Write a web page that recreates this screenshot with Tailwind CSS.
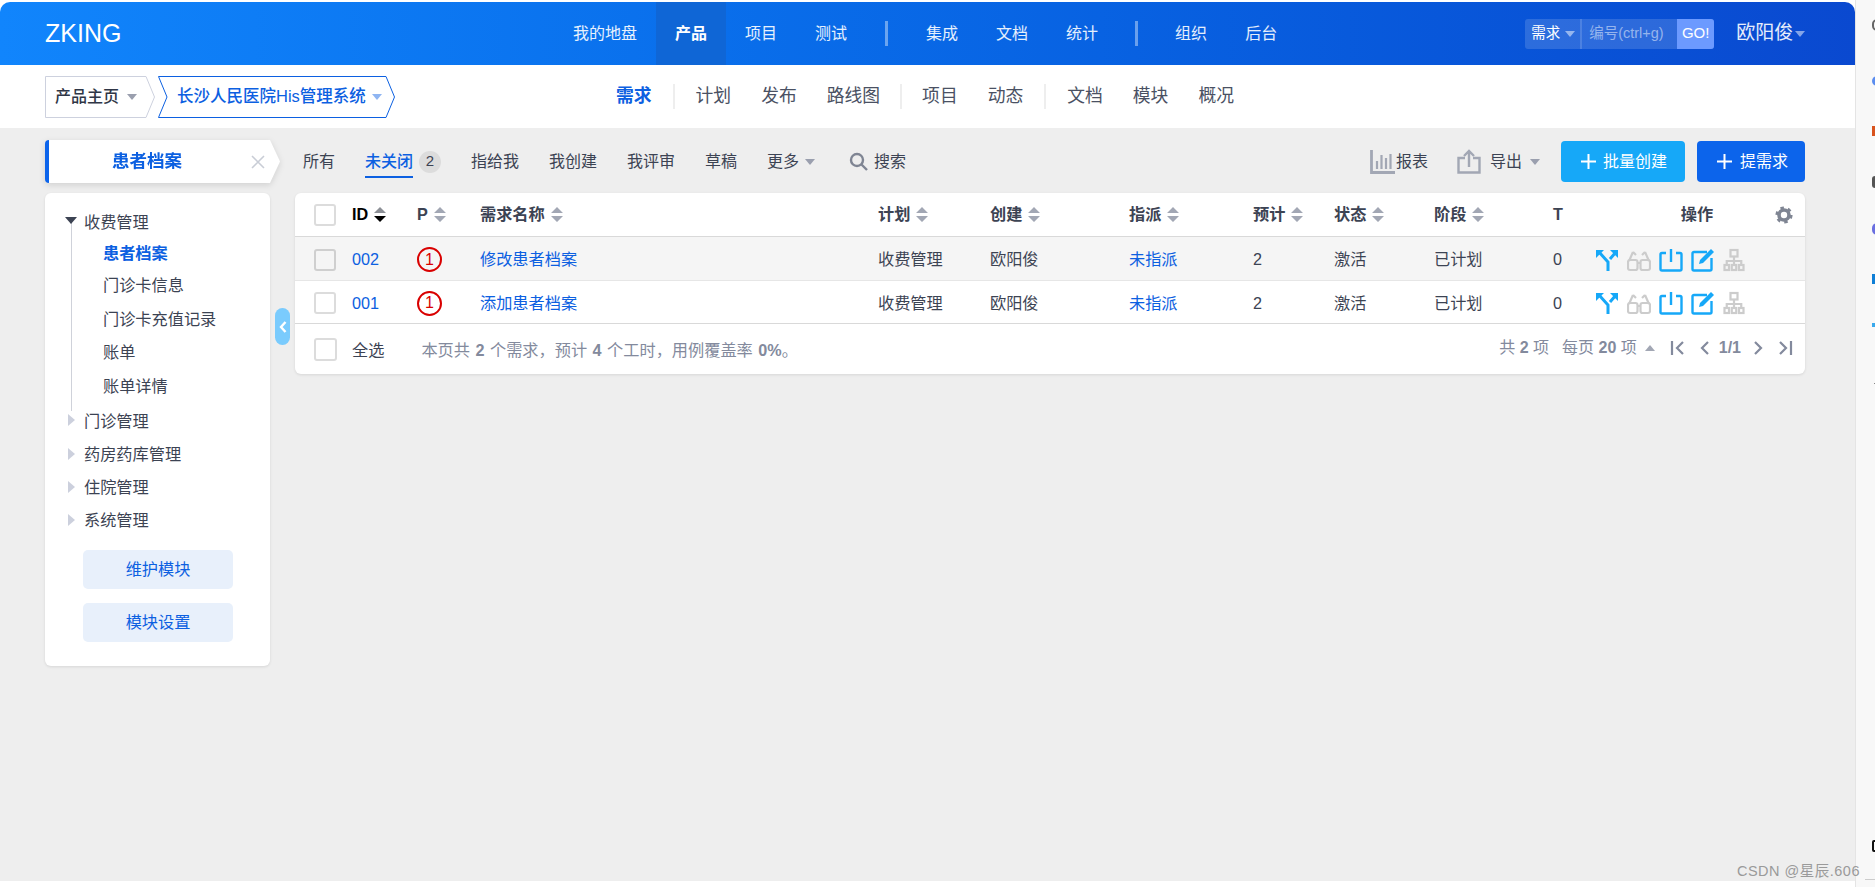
<!DOCTYPE html>
<html lang="zh">
<head>
    <meta charset="UTF-8">
    <title>需求 - ZKING</title>
    <script src="https://cdn.jsdelivr.net/npm/@tailwindcss/browser@4"></script>
</head>
<body class="w-[1875px] h-[887px] overflow-hidden bg-white flex font-['Liberation_Sans','Noto_Sans_CJK_SC',sans-serif] text-[16px] text-[#3c4353]">
    <div class="w-[1855px] h-full flex flex-col pt-[2px] relative z-10">

        <!-- 顶部导航 -->
        <header class="h-[63px] shrink-0 flex items-center rounded-t-[10px] bg-linear-to-r from-[#1185fc] to-[#0a49d0] text-white">
            <div class="pl-[45px] w-[554px] text-[25px] leading-none">ZKING</div>
            <nav class="flex items-stretch h-full text-white/90">
                <a class="px-[19px] flex items-center">我的地盘</a>
                <a class="px-[19px] flex items-center bg-[#0f66d6] font-bold text-white">产品</a>
                <a class="px-[19px] flex items-center">项目</a>
                <a class="px-[19px] flex items-center">测试</a>
                <span class="mx-[19px] my-auto w-[3px] h-[25px] bg-white/40"></span>
                <a class="px-[19px] flex items-center">集成</a>
                <a class="px-[19px] flex items-center">文档</a>
                <a class="px-[19px] flex items-center">统计</a>
                <span class="mx-[18px] my-auto w-[3px] h-[25px] bg-white/40"></span>
                <a class="px-[19px] flex items-center">组织</a>
                <a class="px-[19px] flex items-center">后台</a>
            </nav>
            <div class="ml-[229px] flex h-[30px] w-[189px] rounded-[3px] overflow-hidden bg-white/15 text-[14.5px]">
                <div class="w-[57px] flex items-center pl-[6px] gap-[5px] border-r-2 border-white/15">需求<span class="w-0 h-0 border-x-[5px] border-x-transparent border-t-[6px] border-t-white/50"></span></div>
                <div class="w-[95px] flex items-center pl-[7px] text-white/50">编号(ctrl+g)</div>
                <div class="w-[37px] flex items-center justify-center bg-[#6c9aff] text-[15px]">GO!</div>
            </div>
            <div class="ml-[22px] flex items-center gap-[2px] text-[19px] text-white/90">欧阳俊<span class="w-0 h-0 border-x-[5px] border-x-transparent border-t-[6px] border-t-white/50"></span></div>
        </header>

        <!-- 二级导航 -->
        <div class="h-[63px] shrink-0 flex items-center pl-[45px]">
            <a class="relative w-[110px] h-[42px] flex items-center pl-[10px] gap-[8px] font-medium text-[#2f3646]">
                <svg class="absolute left-0 top-0" width="110" height="42" fill="none" stroke="#cdd1de" stroke-width="1"><path d="M.5.5H101L109.5 21 101 41.5H.5z"/></svg>
                <span class="relative">产品主页</span><span class="relative w-0 h-0 border-x-[5px] border-x-transparent border-t-[6px] border-t-[#9a9fae]"></span>
            </a>
            <a class="relative ml-[3px] w-[237px] h-[42px] flex items-center pl-[19px] gap-[6px] text-[16.5px] font-medium text-[#0c60e1]">
                <svg class="absolute left-0 top-0" width="237" height="42" fill="none" stroke="#0c60e1" stroke-width="1"><path d="M.5.5H228L236.5 21 228 41.5H.5L9 21z"/></svg>
                <span class="relative">长沙人民医院His管理系统</span><span class="relative w-0 h-0 border-x-[5px] border-x-transparent border-t-[6px] border-t-[#8fb5f2]"></span>
            </a>
            <nav class="ml-[206px] flex items-center text-[17.8px] text-[#4a5163]">
                <a class="px-[15px] font-bold text-[#0c60e1]">需求</a>
                <span class="mx-[6px] w-[2px] h-[25px] bg-[#eeeeee]"></span>
                <a class="px-[15px]">计划</a>
                <a class="px-[15px]">发布</a>
                <a class="px-[15px]">路线图</a>
                <span class="mx-[5px] w-[2px] h-[25px] bg-[#eeeeee]"></span>
                <a class="px-[15px]">项目</a>
                <a class="px-[15px]">动态</a>
                <span class="mx-[6px] w-[2px] h-[25px] bg-[#eeeeee]"></span>
                <a class="px-[15px]">文档</a>
                <a class="px-[15px]">模块</a>
                <a class="px-[15px]">概况</a>
            </nav>
        </div>

        <!-- 内容区 -->
        <main class="flex-1 bg-[#eeeeee] pl-[45px] pr-[50px] pt-[12px] relative">
            <!-- 工具条 -->
            <div class="h-[43px] flex items-center">
                <div class="drop-shadow-[0_2px_3px_rgba(0,0,0,0.12)] shrink-0">
                    <div class="w-[235px] h-[43px] bg-white border-l-4 border-[#0c64eb] rounded-l-[4px] flex items-center [clip-path:polygon(0_0,225px_0,235px_50%,225px_100%,0_100%)]">
                        <span class="ml-[63px] w-[70px] whitespace-nowrap text-[17.5px] font-bold text-[#0c60e1]">患者档案</span>
                        <svg class="ml-[69px]" width="14" height="14" fill="none" stroke="#c9cdd6" stroke-width="1.6"><path d="M1 1l12 12M13 1L1 13"/></svg>
                    </div>
                </div>
                <nav class="ml-[23px] flex items-center gap-[30px]">
                    <a>所有</a>
                    <div class="flex items-center gap-[6px]">
                        <a class="relative font-medium text-[#0c60e1]">未关闭<span class="absolute left-0 right-0 top-[26px] h-[2px] bg-[#0c60e1]"></span></a>
                        <span class="w-[22px] h-[22px] rounded-full bg-[#dcdcdc] flex items-center justify-center text-[15px]">2</span>
                    </div>
                    <a>指给我</a>
                    <a>我创建</a>
                    <a>我评审</a>
                    <a>草稿</a>
                    <a class="flex items-center gap-[6px]">更多<span class="w-0 h-0 border-x-[5px] border-x-transparent border-t-[6px] border-t-[#9a9fae]"></span></a>
                    <a class="ml-[4px] flex items-center gap-[6px]">
                        <svg width="19" height="19" viewBox="0 0 19 19" fill="none" stroke="#7f8593" stroke-width="2.4"><circle cx="8" cy="8" r="6"/><path d="M12.5 12.5L18 18"/></svg>搜索
                    </a>
                </nav>
                <div class="ml-auto flex items-center">
                    <a class="flex items-center gap-[1px]">
                        <svg width="25" height="24" viewBox="0 0 25 24" fill="none" stroke="#a2a7b4" stroke-width="2.2"><path d="M1.500 0v22.500H25" stroke-width="2.800"/><path d="M7 19V11M11.500 19V5M16 19V8M20.500 19V4"/></svg>报表
                    </a>
                    <a class="ml-[29px] flex items-center gap-[9px]">
                        <svg width="24" height="25" viewBox="0 0 24 25" fill="none" stroke="#a2a7b4" stroke-width="2.400"><path d="M8 9H1.500v14.500h21V9H16"/><path d="M12 18V2M7 7l5-5 5 5"/></svg>导出
                    </a>
                    <span class="ml-[8px] w-0 h-0 border-x-[5px] border-x-transparent border-t-[6px] border-t-[#9a9fae]"></span>
                    <a class="ml-[21px] w-[124px] h-[41px] rounded-[4px] bg-[#16a8f8] text-white flex items-center pl-[20px] gap-[7px]">
                        <svg width="15" height="15" fill="none" stroke="#fff" stroke-width="2"><path d="M7.500 0v15M0 7.500h15"/></svg>批量创建
                    </a>
                    <a class="ml-[12px] w-[108px] h-[41px] rounded-[4px] bg-[#0c64eb] text-white flex items-center pl-[20px] gap-[8px]">
                        <svg width="15" height="15" fill="none" stroke="#fff" stroke-width="2"><path d="M7.500 0v15M0 7.500h15"/></svg>提需求
                    </a>
                </div>
            </div>

            <div class="mt-[10px] flex items-start gap-[25px]">
                <!-- 模块树 -->
                <aside class="w-[225px] h-[473px] shrink-0 bg-white rounded-[6px] shadow-[0_1px_3px_rgba(0,0,0,0.1)] pt-[13px] relative text-[16.2px]">
                    <span class="absolute left-[25.500px] top-[29px] w-[1px] h-[189px] bg-[#cfd2da]"></span>
                    <div class="flex items-center h-[32px] pl-[39px] relative">
                        <span class="absolute left-[20px] top-[11px] w-0 h-0 border-x-[6px] border-x-transparent border-t-[7px] border-t-[#3c4353]"></span>收费管理
                    </div>
                    <ul class="pl-[58px]">
                        <li class="h-[31px] flex items-center font-bold text-[#0c60e1]">患者档案</li>
                        <li class="h-[33px] flex items-center">门诊卡信息</li>
                        <li class="h-[34px] flex items-center">门诊卡充值记录</li>
                        <li class="h-[33px] flex items-center">账单</li>
                        <li class="h-[34px] flex items-center">账单详情</li>
                    </ul>
                    <div class="flex items-center h-[34px] pl-[39px] relative mt-[1px]"><span class="absolute left-[23px] top-[10px] w-0 h-0 border-y-[6px] border-y-transparent border-l-[7px] border-l-[#ccd0dd]"></span>门诊管理</div>
                    <div class="flex items-center h-[33px] pl-[39px] relative"><span class="absolute left-[23px] top-[10px] w-0 h-0 border-y-[6px] border-y-transparent border-l-[7px] border-l-[#ccd0dd]"></span>药房药库管理</div>
                    <div class="flex items-center h-[33px] pl-[39px] relative"><span class="absolute left-[23px] top-[10px] w-0 h-0 border-y-[6px] border-y-transparent border-l-[7px] border-l-[#ccd0dd]"></span>住院管理</div>
                    <div class="flex items-center h-[33px] pl-[39px] relative"><span class="absolute left-[23px] top-[10px] w-0 h-0 border-y-[6px] border-y-transparent border-l-[7px] border-l-[#ccd0dd]"></span>系统管理</div>
                    <div class="mt-[13px] ml-[38px] w-[150px] flex flex-col gap-[14px] text-[#0c60e1]">
                        <a class="h-[39px] rounded-[5px] bg-[#e8f0fb] flex items-center justify-center">维护模块</a>
                        <a class="h-[39px] rounded-[5px] bg-[#e8f0fb] flex items-center justify-center">模块设置</a>
                    </div>
                    <button class="absolute left-[230px] top-[115px] w-[15px] h-[37px] rounded-full bg-[#7acbfd] flex items-center justify-center">
                        <svg width="8" height="12" fill="none" stroke="#fff" stroke-width="2.400"><path d="M6.500 1L2 6l4.500 5"/></svg>
                    </button>
                </aside>

                <!-- 需求列表 -->
                <section class="w-[1510px] bg-white rounded-[6px] shadow-[0_1px_3px_rgba(0,0,0,0.1)] text-[16.2px]">
                    <table class="w-full table-fixed border-separate border-spacing-0 text-left">
                        <thead>
                            <tr class="h-[44px]">
                                <th class="w-[57px] pl-[19px] border-b border-[#d9d9d9]"><span class="block w-[22px] h-[22px] rounded-[3px] border-2 border-[#dcdcdc]"></span></th>
                                <th class="w-[65px] border-b border-[#d9d9d9] font-bold text-black"><span class="flex items-center gap-[6px]">ID<svg width="12" height="15"><path d="M6 0l6 6H0z" fill="#8c8f96"/><path d="M6 15l6-6H0z" fill="#000"/></svg></span></th>
                                <th class="w-[63px] border-b border-[#d9d9d9] font-bold"><span class="flex items-center gap-[6px]">P<svg width="12" height="15" fill="#a2a7b4"><path d="M6 0l6 6H0zM6 15l6-6H0z"/></svg></span></th>
                                <th class="w-[398px] border-b border-[#d9d9d9] font-bold"><span class="flex items-center gap-[6px]">需求名称<svg width="12" height="15" fill="#a2a7b4"><path d="M6 0l6 6H0zM6 15l6-6H0z"/></svg></span></th>
                                <th class="w-[112px] border-b border-[#d9d9d9] font-bold"><span class="flex items-center gap-[6px]">计划<svg width="12" height="15" fill="#a2a7b4"><path d="M6 0l6 6H0zM6 15l6-6H0z"/></svg></span></th>
                                <th class="w-[139px] border-b border-[#d9d9d9] font-bold"><span class="flex items-center gap-[6px]">创建<svg width="12" height="15" fill="#a2a7b4"><path d="M6 0l6 6H0zM6 15l6-6H0z"/></svg></span></th>
                                <th class="w-[124px] border-b border-[#d9d9d9] font-bold"><span class="flex items-center gap-[6px]">指派<svg width="12" height="15" fill="#a2a7b4"><path d="M6 0l6 6H0zM6 15l6-6H0z"/></svg></span></th>
                                <th class="w-[81px] border-b border-[#d9d9d9] font-bold"><span class="flex items-center gap-[6px]">预计<svg width="12" height="15" fill="#a2a7b4"><path d="M6 0l6 6H0zM6 15l6-6H0z"/></svg></span></th>
                                <th class="w-[100px] border-b border-[#d9d9d9] font-bold"><span class="flex items-center gap-[6px]">状态<svg width="12" height="15" fill="#a2a7b4"><path d="M6 0l6 6H0zM6 15l6-6H0z"/></svg></span></th>
                                <th class="w-[119px] border-b border-[#d9d9d9] font-bold"><span class="flex items-center gap-[6px]">阶段<svg width="12" height="15" fill="#a2a7b4"><path d="M6 0l6 6H0zM6 15l6-6H0z"/></svg></span></th>
                                <th class="w-[42px] border-b border-[#d9d9d9] font-bold">T</th>
                                <th class="border-b border-[#d9d9d9] font-bold relative">
                                    <span class="block text-center pr-[6px]">操作</span>
                                    <svg class="absolute right-[12px] top-[13px]" width="18" height="18" viewBox="0 0 18 18" fill="none" stroke="#7f8593"><circle cx="9" cy="9" r="5" stroke-width="3.600"/><circle cx="9" cy="9" r="7.300" stroke-width="2.600" stroke-dasharray="3.500 4.140"/></svg>
                                </th>
                            </tr>
                        </thead>
                        <tbody class="[&_td]:pt-[2px]">
                            <tr class="h-[44px] bg-[#f5f5f5]">
                                <td class="pl-[19px] border-b border-[#e6e6e6]"><span class="block w-[22px] h-[22px] rounded-[3px] border-2 border-[#cfcfcf]"></span></td>
                                <td class="border-b border-[#e6e6e6] text-[#0c60e1]">002</td>
                                <td class="border-b border-[#e6e6e6]"><span class="w-[25px] h-[25px] rounded-full border-2 border-[#d90000] text-[#d90000] flex items-center justify-center text-[16px]">1</span></td>
                                <td class="border-b border-[#e6e6e6] text-[#0c60e1]">修改患者档案</td>
                                <td class="border-b border-[#e6e6e6]">收费管理</td>
                                <td class="border-b border-[#e6e6e6]">欧阳俊</td>
                                <td class="border-b border-[#e6e6e6] text-[#0c60e1]">未指派</td>
                                <td class="border-b border-[#e6e6e6]">2</td>
                                <td class="border-b border-[#e6e6e6]">激活</td>
                                <td class="border-b border-[#e6e6e6]">已计划</td>
                                <td class="border-b border-[#e6e6e6]">0</td>
                                <td class="border-b border-[#e6e6e6]">
                                    <div class="flex items-center gap-[8px]">
                                        <svg width="24" height="24" viewBox="0 0 24 24" fill="none" stroke="#16a8f8" stroke-width="3"><path d="M13 23V14L4 4M15 11l6-7"/><path d="M1 2h8L1 10zM23 2h-8l8 8z" fill="#16a8f8" stroke="none"/></svg>
                                        <svg width="24" height="24" viewBox="0 0 24 24" fill="none" stroke="#cccccc" stroke-width="2.200"><rect x="1" y="12" width="9.500" height="10" rx="2"/><rect x="13.500" y="12" width="9.500" height="10" rx="2"/><path d="M10.500 15h3M2 13l4-9M22 13l-4-9M6 4l3 3M18 4l-3 3"/></svg>
                                        <svg width="24" height="24" viewBox="0 0 24 24" fill="none" stroke="#16a8f8" stroke-width="2.400"><path d="M7 5H3a1.500 1.500 0 0 0-1.500 1.500V21A1.500 1.500 0 0 0 3 22.500h18a1.500 1.500 0 0 0 1.500-1.500V6.500A1.500 1.500 0 0 0 21 5h-4M12 1v13"/></svg>
                                        <svg width="24" height="24" viewBox="0 0 24 24" fill="none" stroke="#16a8f8" stroke-width="2.400"><path d="M16 4H3a1.500 1.500 0 0 0-1.500 1.500V21A1.500 1.500 0 0 0 3 22.500h16a1.500 1.500 0 0 0 1.500-1.500V10"/><path d="M9 12l11-11 3 3-11 11-4 1z" fill="#16a8f8" stroke="none"/></svg>
                                        <svg width="22" height="24" viewBox="0 0 22 24" fill="none" stroke="#cccccc" stroke-width="2.200"><rect x="7.500" y="2" width="7" height="6.500"/><rect x="1.500" y="17" width="4.500" height="5"/><rect x="8.750" y="17" width="4.500" height="5"/><rect x="16" y="17" width="4.500" height="5"/><path d="M11 8v9M3.750 17v-4h14.500v4"/></svg>
                                    </div>
                                </td>
                            </tr>
                            <tr class="h-[43px]">
                                <td class="pl-[19px] border-b border-[#d9d9d9]"><span class="block w-[22px] h-[22px] rounded-[3px] border-2 border-[#dcdcdc]"></span></td>
                                <td class="border-b border-[#d9d9d9] text-[#0c60e1]">001</td>
                                <td class="border-b border-[#d9d9d9]"><span class="w-[25px] h-[25px] rounded-full border-2 border-[#d90000] text-[#d90000] flex items-center justify-center text-[16px]">1</span></td>
                                <td class="border-b border-[#d9d9d9] text-[#0c60e1]">添加患者档案</td>
                                <td class="border-b border-[#d9d9d9]">收费管理</td>
                                <td class="border-b border-[#d9d9d9]">欧阳俊</td>
                                <td class="border-b border-[#d9d9d9] text-[#0c60e1]">未指派</td>
                                <td class="border-b border-[#d9d9d9]">2</td>
                                <td class="border-b border-[#d9d9d9]">激活</td>
                                <td class="border-b border-[#d9d9d9]">已计划</td>
                                <td class="border-b border-[#d9d9d9]">0</td>
                                <td class="border-b border-[#d9d9d9]">
                                    <div class="flex items-center gap-[8px]">
                                        <svg width="24" height="24" viewBox="0 0 24 24" fill="none" stroke="#16a8f8" stroke-width="3"><path d="M13 23V14L4 4M15 11l6-7"/><path d="M1 2h8L1 10zM23 2h-8l8 8z" fill="#16a8f8" stroke="none"/></svg>
                                        <svg width="24" height="24" viewBox="0 0 24 24" fill="none" stroke="#cccccc" stroke-width="2.200"><rect x="1" y="12" width="9.500" height="10" rx="2"/><rect x="13.500" y="12" width="9.500" height="10" rx="2"/><path d="M10.500 15h3M2 13l4-9M22 13l-4-9M6 4l3 3M18 4l-3 3"/></svg>
                                        <svg width="24" height="24" viewBox="0 0 24 24" fill="none" stroke="#16a8f8" stroke-width="2.400"><path d="M7 5H3a1.500 1.500 0 0 0-1.500 1.500V21A1.500 1.500 0 0 0 3 22.500h18a1.500 1.500 0 0 0 1.500-1.500V6.500A1.500 1.500 0 0 0 21 5h-4M12 1v13"/></svg>
                                        <svg width="24" height="24" viewBox="0 0 24 24" fill="none" stroke="#16a8f8" stroke-width="2.400"><path d="M16 4H3a1.500 1.500 0 0 0-1.500 1.500V21A1.500 1.500 0 0 0 3 22.500h16a1.500 1.500 0 0 0 1.500-1.500V10"/><path d="M9 12l11-11 3 3-11 11-4 1z" fill="#16a8f8" stroke="none"/></svg>
                                        <svg width="22" height="24" viewBox="0 0 22 24" fill="none" stroke="#cccccc" stroke-width="2.200"><rect x="7.500" y="2" width="7" height="6.500"/><rect x="1.500" y="17" width="4.500" height="5"/><rect x="8.750" y="17" width="4.500" height="5"/><rect x="16" y="17" width="4.500" height="5"/><path d="M11 8v9M3.750 17v-4h14.500v4"/></svg>
                                    </div>
                                </td>
                            </tr>
                        </tbody>
                    </table>
                    <div class="h-[50px] flex items-center pl-[19px] pr-[12px] text-[#838a9d]">
                        <span class="w-[23px] h-[23px] rounded-[3px] border-2 border-[#dcdcdc]"></span>
                        <span class="ml-[15px] pt-[2px] text-[#3c4353]">全选</span>
                        <span class="ml-[37px] pt-[2px] [word-spacing:1px]">本页共 <b>2</b> 个需求，预计 <b>4</b> 个工时，用例覆盖率 <b>0%</b>。</span>
                        <div class="ml-auto flex items-center -mt-[3px] text-[16px]">
                            <span>共 <b>2</b> 项</span>
                            <span class="ml-[13px]">每页 <b>20</b> 项</span>
                            <span class="ml-[8px] w-0 h-0 border-x-[5px] border-x-transparent border-b-[6px] border-b-[#a2a7b4]"></span>
                            <svg class="ml-[15px]" width="15" height="14" fill="none" stroke="#838a9d" stroke-width="2.200"><path d="M2 0v14M13 1L7 7l6 6"/></svg>
                            <svg class="ml-[14px]" width="11" height="14" fill="none" stroke="#838a9d" stroke-width="2.200"><path d="M9 1L3 7l6 6"/></svg>
                            <b class="ml-[9px]">1/1</b>
                            <svg class="ml-[12px]" width="11" height="14" fill="none" stroke="#838a9d" stroke-width="2.200"><path d="M2 1l6 6-6 6"/></svg>
                            <svg class="ml-[14px]" width="15" height="14" fill="none" stroke="#838a9d" stroke-width="2.200"><path d="M13 0v14M2 1l6 6-6 6"/></svg>
                        </div>
                    </div>
                </section>
            </div>
        </main>
        <div class="h-[6px] shrink-0 bg-white"></div>
        <span class="absolute right-[-5px] bottom-[9px] whitespace-nowrap text-[14.500px] leading-none tracking-[0.5px] text-[#9a9a9a]">CSDN @星辰.606</span>
    </div>

    <!-- 浏览器侧栏（被截断） -->
    <div class="w-[20px] h-full bg-[#f8f8f8] border-l border-[#e4e4e4] relative overflow-hidden">
        <span class="absolute left-[16px] top-[19px] w-[10px] h-[12px] rounded-full border-2 border-[#666666]"></span>
        <span class="absolute left-[16px] top-[76px] w-[10px] h-[10px] rounded-full bg-[#5b8def]"></span>
        <span class="absolute left-[16px] top-[126px] w-[10px] h-[10px] bg-[#d9541e]"></span>
        <span class="absolute left-[16px] top-[176px] w-[10px] h-[12px] rounded-[3px] bg-[#555555]"></span>
        <span class="absolute left-[16px] top-[223px] w-[10px] h-[12px] rounded-full bg-[#6a6fe0]"></span>
        <span class="absolute left-[16px] top-[274px] w-[10px] h-[10px] bg-[#0f7fd6]"></span>
        <span class="absolute left-[16px] top-[323px] w-[10px] h-[4px] bg-[#3aa9ec]"></span>
        <span class="absolute left-[18px] top-[383px] w-[6px] h-[1px] bg-[#888888]"></span>
        <span class="absolute left-[16px] top-[840px] w-[10px] h-[12px] rounded-[2px] border-2 border-[#111111]"></span>
        <span class="absolute left-[9px] top-[879px] w-[12px] h-[1px] bg-[#cccccc]"></span>
    </div>
</body>
</html>
